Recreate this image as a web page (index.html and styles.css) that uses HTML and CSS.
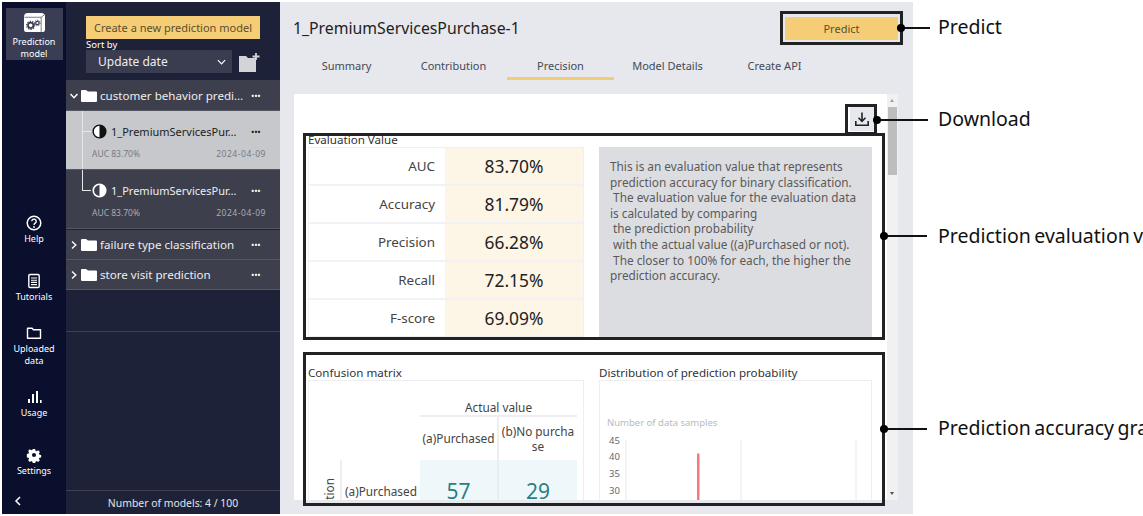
FILE: index.html
```html
<!DOCTYPE html>
<html lang="en">
<head>
<meta charset="utf-8">
<title>Precision</title>
<link rel="stylesheet" href="styles.css">
</head>
<body>
<div class="app">
  <nav class="rail">
    <a class="rail-top">
      <svg class="icon-model" viewBox="0 0 24 22"><path d="M5 1h15l3 1.500v15.500a3 3 0 0 1-3 3H4a3 3 0 0 1-3-3V5a4 4 0 0 1 4-4z" fill="#fff"/><path d="M1.500 5.500h17.500l4-3M19 5.500V21" stroke="#3a3e54" stroke-width=".7" fill="none"/><circle cx="8" cy="14" r="2.800" fill="none" stroke="#3a3e54" stroke-width="1.800"/><circle cx="8" cy="14" r="4.200" fill="none" stroke="#3a3e54" stroke-width="1.300" stroke-dasharray="1.400 1.200"/><circle cx="15" cy="11.500" r="1.800" fill="none" stroke="#3a3e54" stroke-width="1.300"/><circle cx="15" cy="11.500" r="2.900" fill="none" stroke="#3a3e54" stroke-width="1" stroke-dasharray="1.200 1"/></svg>
      <span>Prediction<br>model</span>
    </a>
    <div class="rail-items">
      <a class="rail-item">
        <svg class="icon" viewBox="0 0 16 16"><circle cx="8" cy="8" r="6.800" fill="none" stroke="#fff" stroke-width="1.500"/><path d="M5.800 6.300a2.200 2.200 0 1 1 3.400 1.900c-.8.500-1.200.9-1.200 1.800" fill="none" stroke="#fff" stroke-width="1.400"/><circle cx="8" cy="12" r=".9" fill="#fff"/></svg>
        <span>Help</span>
      </a>
      <a class="rail-item">
        <svg class="icon" viewBox="0 0 16 16"><rect x="2.800" y="1.500" width="10.400" height="13" rx="1.200" fill="none" stroke="#fff" stroke-width="1.400"/><path d="M5 5h6M5 7.200h6M5 9.400h6M5 11.600h6" stroke="#fff" stroke-width="1.100"/></svg>
        <span>Tutorials</span>
      </a>
      <a class="rail-item">
        <svg class="icon" viewBox="0 0 16 16"><path d="M1.500 3.200h4.600l1.300 1.500h7.100v8.600h-13z" fill="none" stroke="#fff" stroke-width="1.400" stroke-linejoin="round"/></svg>
        <span>Uploaded<br>data</span>
      </a>
      <a class="rail-item">
        <svg class="icon" viewBox="0 0 16 16"><path d="M2 14v-4h2v4zM6 14V5h2v9zM10 14V2h2v12zM14 14v-3h1.600v3z" fill="#fff"/></svg>
        <span>Usage</span>
      </a>
      <a class="rail-item">
        <svg class="icon" viewBox="0 0 16 16"><path fill="#fff" fill-rule="evenodd" d="M6.600 1h2.800l.4 2 1.300.6 1.800-1.100 2 2-1.100 1.800.6 1.300 2 .4v2.800l-2 .4-.6 1.300 1.100 1.800-2 2-1.800-1.100-1.300.6-.4 2H6.600l-.4-2-1.300-.6-1.800 1.100-2-2 1.100-1.800-.6-1.300-2-.4V6.700l2-.4.6-1.300L1.100 3.200l2-2 1.800 1.100 1.300-.6zM8 5.600a2.400 2.400 0 1 0 0 4.800 2.400 2.400 0 0 0 0-4.800z" transform="translate(1.200 1.200) scale(.85)"/></svg>
        <span>Settings</span>
      </a>
    </div>
    <svg class="rail-collapse" viewBox="0 0 8 10"><path d="M6 1 2 5l4 4" fill="none" stroke="#fff" stroke-width="1.500"/></svg>
  </nav>

  <aside class="panel">
    <div class="panel-head">
      <button class="btn-create">Create a new prediction model</button>
      <label class="sort-label">Sort by</label>
      <div class="sort-row">
        <div class="select">
          <span>Update date</span>
          <svg class="select-caret" viewBox="0 0 10 6"><path d="M1 1l4 4 4-4" fill="none" stroke="#fff" stroke-width="1.300"/></svg>
        </div>
        <svg class="icon-newfolder" viewBox="0 0 21 19"><path d="M0 3h7l2 2h8v14H0z" fill="#d3d4d8"/><path d="M17 0v7M13.500 3.500h7" stroke="#d3d4d8" stroke-width="1.800"/></svg>
      </div>
    </div>
    <div class="tree">
      <div class="folder">
        <svg class="chev" viewBox="0 0 10 10"><path d="M1.500 3 5 6.800 8.500 3" fill="none" stroke="#fff" stroke-width="1.400"/></svg>
        <svg class="folder-icon" viewBox="0 0 16 12"><path d="M0 1a1 1 0 0 1 1-1h4l2 1.500h8a1 1 0 0 1 1 1V11a1 1 0 0 1-1 1H1a1 1 0 0 1-1-1z" fill="#fff"/></svg>
        <span class="name">customer behavior predi…</span>
        <span class="dots">•••</span>
      </div>
      <div class="model model-first model-selected">
        <div class="model-top">
          <svg class="half" viewBox="0 0 16 16"><circle cx="8" cy="8" r="6.800" fill="#fff" stroke="#111" stroke-width="1.500"/><path d="M8 1.200a6.800 6.800 0 0 1 0 13.600z" fill="#111"/></svg>
          <span class="name">1_PremiumServicesPur…</span>
          <span class="dots">•••</span>
        </div>
        <div class="model-meta"><span>AUC 83.70%</span><span class="model-date">2024-04-09</span></div>
      </div>
      <div class="model model-last">
        <div class="model-top">
          <svg class="half" viewBox="0 0 16 16"><circle cx="8" cy="8" r="6.800" fill="#fff" stroke="#fff" stroke-width="1.500"/><path d="M8 2.200a5.800 5.800 0 0 0 0 11.600z" fill="#3d3f4d"/></svg>
          <span class="name">1_PremiumServicesPur…</span>
          <span class="dots">•••</span>
        </div>
        <div class="model-meta"><span>AUC 83.70%</span><span class="model-date">2024-04-09</span></div>
      </div>
      <div class="folder folder-gap">
        <svg class="chev" viewBox="0 0 10 10"><path d="M3 1.500 6.800 5 3 8.500" fill="none" stroke="#fff" stroke-width="1.400"/></svg>
        <svg class="folder-icon" viewBox="0 0 16 12"><path d="M0 1a1 1 0 0 1 1-1h4l2 1.500h8a1 1 0 0 1 1 1V11a1 1 0 0 1-1 1H1a1 1 0 0 1-1-1z" fill="#fff"/></svg>
        <span class="name">failure type classification</span>
        <span class="dots">•••</span>
      </div>
      <div class="folder">
        <svg class="chev" viewBox="0 0 10 10"><path d="M3 1.500 6.800 5 3 8.500" fill="none" stroke="#fff" stroke-width="1.400"/></svg>
        <svg class="folder-icon" viewBox="0 0 16 12"><path d="M0 1a1 1 0 0 1 1-1h4l2 1.500h8a1 1 0 0 1 1 1V11a1 1 0 0 1-1 1H1a1 1 0 0 1-1-1z" fill="#fff"/></svg>
        <span class="name">store visit prediction</span>
        <span class="dots">•••</span>
      </div>
    </div>
    <div class="panel-spacer"></div>
    <div class="panel-foot">Number of models: 4 / 100</div>
  </aside>

  <main class="main">
    <header class="main-head">
      <h1 class="title">1_PremiumServicesPurchase-1</h1>
      <button class="btn-predict">Predict</button>
    </header>
    <div class="tabs">
      <a class="tab">Summary</a>
      <a class="tab">Contribution</a>
      <a class="tab tab-active">Precision</a>
      <a class="tab">Model Details</a>
      <a class="tab">Create API</a>
    </div>
    <div class="scroller">
      <div class="content">
        <div class="toolbar">
          <button class="btn-download">
            <svg viewBox="0 0 16 16"><path d="M8 1.500v8.500M4.500 6.800 8 10.300l3.500-3.500" fill="none" stroke="#222" stroke-width="1.600"/><path d="M1.800 10v4.200h12.400V10" fill="none" stroke="#222" stroke-width="1.600"/></svg>
          </button>
        </div>
        <section class="eval">
          <div class="eval-left">
            <h2 class="sec-title">Evaluation Value</h2>
            <div class="eval-table">
              <div class="eval-row"><span class="eval-k">AUC</span><span class="eval-v">83.70%</span></div>
              <div class="eval-row"><span class="eval-k">Accuracy</span><span class="eval-v">81.79%</span></div>
              <div class="eval-row"><span class="eval-k">Precision</span><span class="eval-v">66.28%</span></div>
              <div class="eval-row"><span class="eval-k">Recall</span><span class="eval-v">72.15%</span></div>
              <div class="eval-row"><span class="eval-k">F-score</span><span class="eval-v">69.09%</span></div>
            </div>
          </div>
          <p class="eval-desc">This is an evaluation value that represents<br>prediction accuracy for binary classification.<br>&nbsp;The evaluation value for the evaluation data<br>is calculated by comparing<br>&nbsp;the prediction probability<br>&nbsp;with the actual value ((a)Purchased or not).<br>&nbsp;The closer to 100% for each, the higher the<br>prediction accuracy.</p>
        </section>
        <section class="graphs">
          <div class="graph">
            <h2 class="sec-title">Confusion matrix</h2>
            <div class="card matrix">
              <div class="mx-actual">Actual value</div>
              <div class="mx-heads">
                <div class="mx-head">(a)Purchased</div>
                <div class="mx-head mx-head-b">(b)No purcha<br>se</div>
              </div>
              <div class="mx-row">
                <div class="mx-side"><span class="mx-side-text">Prediction</span></div>
                <div class="mx-label">(a)Purchased</div>
                <div class="mx-cell">57</div>
                <div class="mx-cell">29</div>
              </div>
            </div>
          </div>
          <div class="graph">
            <h2 class="sec-title">Distribution of prediction probability</h2>
            <div class="card">
              <svg class="chart" viewBox="0 0 273 130" width="273" height="130">
                <text class="axis-title" x="8" y="46">Number of data samples</text>
                <path d="M27 60V130M142 60V130M257 60V130" stroke="#e8e8ea" stroke-width="1" fill="none"/>
                <text class="tick" x="10" y="64">45</text>
                <text class="tick" x="10" y="80">40</text>
                <text class="tick" x="10" y="97">35</text>
                <text class="tick" x="10" y="114">30</text>
                <path d="M98 73.500V130H100.500V73.500z" fill="#f77a7a"/>
              </svg>
            </div>
          </div>
        </section>
      </div>
      <div class="scrollbar">
        <span class="sb-up"></span>
        <span class="sb-thumb"></span>
        <span class="sb-down"></span>
      </div>
    </div>
  </main>
</div>

<div class="call call-predict"><i></i></div>
<div class="call call-download"><i></i></div>
<div class="call call-eval"><i></i></div>
<div class="call call-graph"><i></i></div>
<div class="note note-predict">Predict</div>
<div class="note note-download">Download</div>
<div class="note note-eval">Prediction evaluation value</div>
<div class="note note-graph">Prediction accuracy graph</div>
</body>
</html>
```
FILE: styles.css
```css
* { box-sizing: border-box; }
html, body { margin: 0; height: 516px; overflow: hidden; background: #fff; }
body { font-family: "Noto Sans", "Open Sans", sans-serif; color: #333; position: relative; width: 1143px; }
button { font-family: inherit; border: 0; padding: 0; }
h1, h2, p { margin: 0; font-weight: 400; }

.app { display: flex; width: 911px; height: 512px; margin: 2px 0 0 2px; }

/* rail */
.rail { width: 64px; background: #0a0f2e; color: #fff; display: flex; flex-direction: column; align-items: center; flex: none; }
.rail-top { margin-top: 6px; width: 57px; height: 52px; background: #3a3e54; display: flex; flex-direction: column; align-items: center; padding-top: 4px; font-size: 9px; line-height: 12px; text-align: center; }
.icon-model { width: 23px; height: 21px; margin-bottom: 3px; }
.rail-items { margin-top: 141px; display: flex; flex-direction: column; width: 100%; }
.rail-item { height: 58px; display: flex; flex-direction: column; align-items: center; justify-content: center; font-size: 9px; line-height: 12px; text-align: center; }
.icon { width: 16px; height: 16px; margin-bottom: 2px; }
.rail-collapse { width: 8px; height: 10px; margin-top: 5px; margin-right: 32px; }

/* panel */
.panel { width: 214px; background: #1e2239; color: #fff; display: flex; flex-direction: column; flex: none; }
.panel-head { height: 79px; padding: 14px 20px 0; border-bottom: 1px solid #3e4152; }
.btn-create { width: 174px; height: 23px; background: #f5cd76; color: #5c4f2d; font-size: 11px; display: block; white-space: nowrap; }
.sort-label { display: block; font-size: 9.500px; line-height: 11px; }
.sort-row { display: flex; align-items: center; gap: 7px; }
.select { width: 146px; height: 23px; background: #3a3d50; display: flex; align-items: center; justify-content: space-between; padding: 0 6px 0 12px; font-size: 12px; color: #eee; }
.select-caret { width: 9px; height: 6px; }
.icon-newfolder { width: 21px; height: 19px; margin-top: 2px; }

.tree { display: flex; flex-direction: column; }
.folder { height: 30px; background: #3d3f4d; display: flex; align-items: center; padding-left: 3px; font-size: 11.600px; color: #eee; border-bottom: 1px solid #555763; }
.folder-gap { margin-top: 1px; }
.chev { width: 10px; height: 10px; flex: none; }
.folder-icon { width: 16px; height: 12px; margin: 0 3px 0 2px; flex: none; }
.name { flex: 1; white-space: nowrap; overflow: hidden; min-width: 0; }
.dots { font-size: 9px; width: 29px; letter-spacing: -.2px; color: #fff; flex: none; }

.model { height: 59px; padding: 12px 0 0 26px; background: #3d3f4d; position: relative; border-bottom: 1px solid #555763; color: #eee; }
.model-selected { background: #c6c8cc; color: #222; }
.model-selected .dots { color: #111; }
.model-top { display: flex; align-items: center; font-size: 11px; height: 16px; }
.half { width: 15px; height: 15px; margin-right: 4px; flex: none; }
.model-meta { display: flex; justify-content: space-between; padding: 0 14px 0 0; font-size: 8.500px; margin-top: 9px; color: #aaacb2; line-height: 12px; }
.model-date { letter-spacing: .55px; }
.model-selected .model-meta { color: #777a80; }
.model::before { content: ""; position: absolute; left: 16px; top: 0; width: 1px; background: #e6e7ea; }
.model::after { content: ""; position: absolute; left: 16px; width: 9px; height: 1px; background: #e6e7ea; top: 20px; }
.model-first::before { height: 100%; }
.model-last::before { height: 20px; }

.panel-spacer { flex: 1; position: relative; }
.panel-spacer::before { content: ""; position: absolute; left: 0; right: 0; top: 41px; height: 1px; background: #3e4152; }
.panel-foot { height: 24px; border-top: 1px solid #3e4152; text-align: center; font-size: 10.400px; line-height: 24px; color: #e4e5e8; }

/* main */
.main { width: 633px; background: #e6e8ee; padding: 0 15px 0 14px; display: flex; flex-direction: column; flex: none; min-width: 0; }
.main-head { display: flex; justify-content: space-between; align-items: center; height: 52px; }
.title { font-size: 15.800px; color: #222; margin-left: -1px; }
.btn-predict { width: 113px; height: 23px; background: #f5cd76; color: #5c4f2d; font-size: 11px; }
.tabs { display: flex; height: 26px; margin-left: -1px; }
.tab { width: 107px; text-align: center; font-size: 11px; line-height: 24px; color: #444a55; height: 26px; }
.tab-active { border-bottom: 3px solid #f3cc78; }
.scroller { height: 406px; margin-top: 14px; background: #fff; overflow: hidden; display: flex; }
.content { padding-left: 14px; flex: 1; min-width: 0; }
.toolbar { display: flex; justify-content: flex-end; padding: 13px 13px 0 0; height: 37px; }
.btn-download { width: 24px; height: 24px; background: #e6e8ee; display: flex; align-items: center; justify-content: center; }
.btn-download svg { width: 16px; height: 16px; }

.scrollbar { width: 11px; flex: none; background: #f1f1f1; display: flex; flex-direction: column; align-items: center; position: relative; }
.sb-thumb { width: 9px; height: 68px; background: #bdbdbd; margin-top: 13px; }
.sb-up, .sb-down { position: absolute; left: 3px; width: 0; height: 0; border-left: 2.500px solid transparent; border-right: 2.500px solid transparent; }
.sb-up { top: 5px; border-bottom: 3px solid #a0a0a0; }
.sb-down { bottom: 5px; border-top: 3px solid #505050; }

.eval { display: grid; grid-template-columns: 276px 273px; gap: 15px; margin-top: 2px; }
.sec-title { font-size: 11.600px; line-height: 14px; color: #333; white-space: nowrap; }
.eval-table { border: 1px solid #f0f0f2; height: 190px; display: flex; flex-direction: column; }
.eval-row { flex: 1; display: grid; grid-template-columns: 136px 1fr; border-bottom: 2px solid #f2f2f4; }
.eval-row:last-child { border-bottom: 0; }
.eval-k { text-align: right; padding-right: 10px; align-self: center; font-size: 13.400px; color: #444; }
.eval-v { background: #fdf5e5; display: flex; align-items: center; justify-content: center; font-size: 17.400px; color: #222; }
.eval-desc { background: #dcdde1; margin-top: 14px; height: 190px; padding: 12px 11px; font-size: 11.800px; line-height: 15.600px; color: #5a5a5a; white-space: nowrap; }

.graphs { display: grid; grid-template-columns: 276px 273px; gap: 15px; margin-top: 29px; }
.card { border: 1px solid #eeeef0; height: 140px; overflow: hidden; }
.chart { display: block; margin: -1px; }
.axis-title { font: 9.500px "Noto Sans", sans-serif; fill: #b8bac0; }
.tick { font: 9.500px "Noto Sans", sans-serif; fill: #666; }
.matrix { padding-top: 18px; }
.mx-actual { margin-left: 111px; width: 157px; text-align: center; font-size: 11.800px; line-height: 16px; border-bottom: 2px solid #eeeef0; height: 18px; color: #444; }
.mx-heads { display: flex; margin-left: 111px; height: 43px; width: 157px; }
.mx-head { width: 77px; display: flex; align-items: center; justify-content: center; text-align: center; font-size: 11.800px; line-height: 15px; color: #444; white-space: nowrap; }
.mx-head-b { width: 80px; border-left: 2px solid #eeeef0; }
.mx-row { display: grid; grid-template-columns: 33px 78px 77px 80px; height: 60px; }
.mx-side { border-right: 2px solid #eeeef0; height: 60px; position: relative; overflow: hidden; }
.mx-side-text { position: absolute; bottom: -14px; left: 13px; writing-mode: vertical-rl; transform: rotate(180deg); font-size: 11.800px; line-height: 14px; color: #444; white-space: nowrap; }
.mx-label { font-size: 11.800px; color: #444; padding: 23px 0 0 3px; white-space: nowrap; }
.mx-cell { background: #eef8fa; color: #2b7f86; font-size: 21px; text-align: center; padding-top: 17px; }
.mx-cell + .mx-cell { border-left: 2px solid #e6eef0; }

/* annotations laid over the screenshot */
.call { position: absolute; border: 3px solid #222; }
.call i { position: absolute; height: 2px; background: #111; }
.call i::before { content: ""; position: absolute; left: 0; top: -3px; width: 8px; height: 8px; border-radius: 50%; background: #000; }
.call-predict { left: 780px; top: 11px; width: 123px; height: 34px; }
.call-predict i { left: 114px; top: 13px; width: 33px; }
.call-download { left: 845px; top: 104px; width: 32px; height: 31px; }
.call-download i { left: 25px; top: 12px; width: 55px; }
.call-eval { left: 303px; top: 133px; width: 582px; height: 207px; }
.call-eval i { left: 574px; top: 99px; width: 47px; }
.call-graph { left: 303px; top: 352px; width: 582px; height: 154px; }
.call-graph i { left: 574px; top: 73px; width: 47px; }
.note { position: absolute; left: 938px; font-size: 19.500px; word-spacing: -1.500px; line-height: 26px; color: #111; white-space: nowrap; }
.note-predict { top: 14px; }
.note-download { top: 106px; }
.note-eval { top: 223px; }
.note-graph { top: 415px; }
```
